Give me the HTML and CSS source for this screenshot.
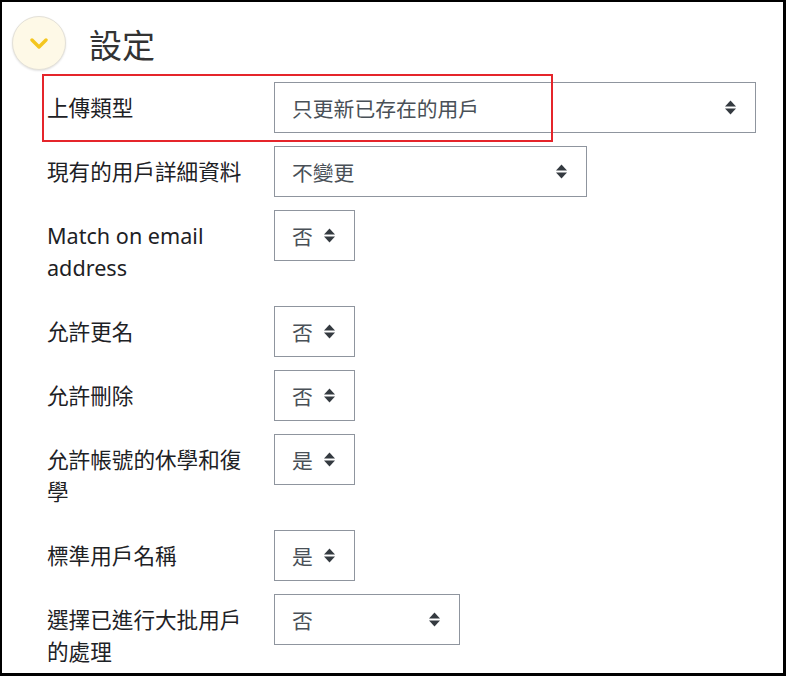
FILE: index.html
```html
<!DOCTYPE html>
<html lang="zh-Hant">
<head>
  <meta charset="UTF-8">
  <meta name="viewport" content="width=device-width, initial-scale=1.0">
  <title>設定</title>
  <link rel="stylesheet" href="styles.css">
</head>
<body>
  <div class="frame">

    <!-- Collapsible section header -->
    <div class="section-head">
      <span class="toggle">
        <svg width="20" height="12" viewBox="0 0 20 12"><polyline points="3,2 10,9 17,2" fill="none" stroke="#f4c61f" stroke-width="3.4" stroke-linecap="round" stroke-linejoin="round"/></svg>
      </span>
      <h2 class="section-title">設定</h2>
    </div>

    <div class="form">
      <div class="row">
        <div class="marker"></div>
        <label class="label">上傳類型</label>
        <div class="select w-full"><span>只更新已存在的用戶</span><svg class="arrow" width="11" height="15" viewBox="0 0 11 15"><polygon points="0,6.5 5.5,0.5 11,6.5"/><polygon points="0,8.5 5.5,14.5 11,8.5"/></svg></div>
      </div>
      <div class="row">
        <label class="label">現有的用戶詳細資料</label>
        <div class="select w-md"><span>不變更</span><svg class="arrow" width="11" height="15" viewBox="0 0 11 15"><polygon points="0,6.5 5.5,0.5 11,6.5"/><polygon points="0,8.5 5.5,14.5 11,8.5"/></svg></div>
      </div>
      <div class="row">
        <label class="label">Match on email address</label>
        <div class="select w-sm"><span>否</span><svg class="arrow" width="11" height="15" viewBox="0 0 11 15"><polygon points="0,6.5 5.5,0.5 11,6.5"/><polygon points="0,8.5 5.5,14.5 11,8.5"/></svg></div>
      </div>
      <div class="row">
        <label class="label">允許更名</label>
        <div class="select w-sm"><span>否</span><svg class="arrow" width="11" height="15" viewBox="0 0 11 15"><polygon points="0,6.5 5.5,0.5 11,6.5"/><polygon points="0,8.5 5.5,14.5 11,8.5"/></svg></div>
      </div>
      <div class="row">
        <label class="label">允許刪除</label>
        <div class="select w-sm"><span>否</span><svg class="arrow" width="11" height="15" viewBox="0 0 11 15"><polygon points="0,6.5 5.5,0.5 11,6.5"/><polygon points="0,8.5 5.5,14.5 11,8.5"/></svg></div>
      </div>
      <div class="row">
        <label class="label">允許帳號的休學和復學</label>
        <div class="select w-sm"><span>是</span><svg class="arrow" width="11" height="15" viewBox="0 0 11 15"><polygon points="0,6.5 5.5,0.5 11,6.5"/><polygon points="0,8.5 5.5,14.5 11,8.5"/></svg></div>
      </div>
      <div class="row">
        <label class="label">標準用戶名稱</label>
        <div class="select w-sm"><span>是</span><svg class="arrow" width="11" height="15" viewBox="0 0 11 15"><polygon points="0,6.5 5.5,0.5 11,6.5"/><polygon points="0,8.5 5.5,14.5 11,8.5"/></svg></div>
      </div>
      <div class="row">
        <label class="label">選擇已進行大批用戶的處理</label>
        <div class="select w-lg"><span>否</span><svg class="arrow" width="11" height="15" viewBox="0 0 11 15"><polygon points="0,6.5 5.5,0.5 11,6.5"/><polygon points="0,8.5 5.5,14.5 11,8.5"/></svg></div>
      </div>
    </div>

  </div>
</body>
</html>
```

FILE: styles.css
```css
html, body {
  margin: 0;
  height: 100%;
  background: #fff;
}
.frame {
  box-sizing: border-box;
  height: 676px;
  overflow: hidden;
  border-style: solid;
  border-color: #000;
  border-width: 2px 3px 3px 2px;
  padding: 14px 0 0 10px;
  font-family: "Noto Sans", "Noto Sans CJK TC", sans-serif;
  color: #1d2125;
}
/* Header with the round collapse toggle */
.section-head {
  display: flex;
  align-items: center;
  gap: 23px;
}
.toggle {
  box-sizing: border-box;
  width: 54px;
  height: 54px;
  border-radius: 50%;
  background: #fef9e7;
  border: 1px solid #e4e1d8;
  box-shadow: 0 1px 2px rgba(0, 0, 0, 0.12);
  display: flex;
  align-items: center;
  justify-content: center;
  padding-top: 2px;
}
.section-title {
  margin: 0;
  font-size: 33px;
  font-weight: 400;
  color: #333;
  line-height: 1;
  padding-top: 4px;
}
.form {
  padding: 12px 0 0 35px;
}
.row {
  position: relative;
  display: flex;
  align-items: flex-start;
  margin-bottom: 13px;
}
.label {
  box-sizing: border-box;
  width: 227px;
  padding: 9.5px 20px 9.5px 0;
  font-size: 21.6px;
  line-height: 32px;
}
/* Highlight box drawn over the first row */
.marker {
  position: absolute;
  left: -5px;
  top: -8px;
  width: 507px;
  height: 64px;
  border: 2px solid #e5252b;
  pointer-events: none;
}
.select {
  box-sizing: border-box;
  height: 51px;
  border: 1px solid #8f959e;
  background: #fff;
  display: flex;
  align-items: center;
  justify-content: space-between;
  padding: 0 19px 0 17px;
  font-size: 20.8px;
  color: #495057;
}
.arrow {
  fill: #343a40;
  flex-shrink: 0;
}
.w-full { width: 482px; }
.w-md { width: 313px; }
.w-sm { width: 81px; }
.w-lg { width: 186px; }
```
